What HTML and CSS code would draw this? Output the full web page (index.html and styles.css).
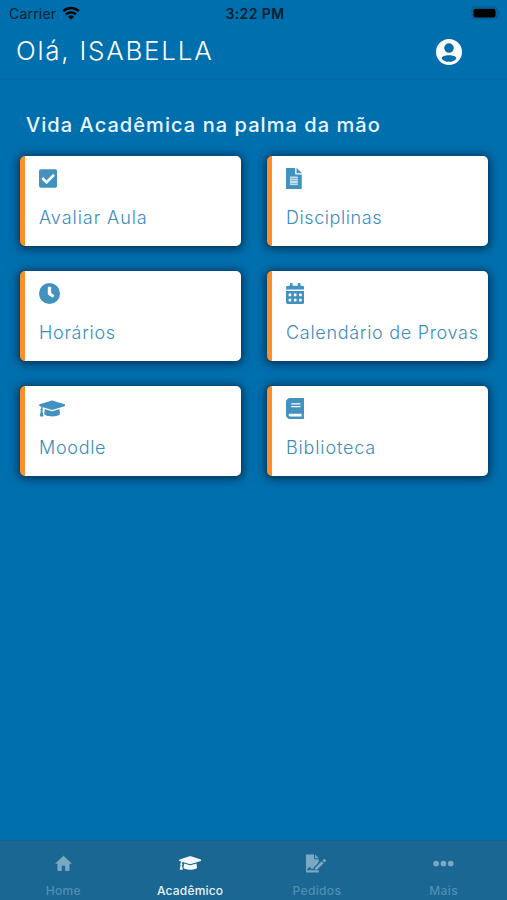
FILE: index.html
```html
<!DOCTYPE html>
<html lang="pt-BR">
<head>
    <meta charset="UTF-8">
    <meta name="viewport" content="width=device-width, initial-scale=1.0">
    <title>Acadêmico</title>
    <link rel="stylesheet" href="styles.css">
</head>
<body>
    <div class="app">
        <div class="status-bar">
            <div class="carrier">
                <span>Carrier</span>
                <svg class="wifi" viewBox="0 0 18 14">
                    <path d="M1.2 5.2a11.2 11.2 0 0 1 15.6 0" fill="none" stroke="currentColor" stroke-width="2.5"/>
                    <path d="M4 8.4a7.1 7.1 0 0 1 10 0" fill="none" stroke="currentColor" stroke-width="2.4"/>
                    <path d="M9 13.6l-2.9-2.9a4.1 4.1 0 0 1 5.8 0z" fill="currentColor"/>
                </svg>
            </div>
            <span class="time">3:22 PM</span>
            <svg class="battery" viewBox="0 0 30 14">
                <rect x="1" y="1" width="25" height="12" rx="3.5" fill="none" stroke="#07578a" stroke-width="1.2"/>
                <rect x="2.5" y="2.8" width="22" height="8.6" rx="2" fill="#000"/>
                <path d="M27.5 5.2c1.6.7 1.6 2.9 0 3.6z" fill="#07578a"/>
            </svg>
        </div>

        <header class="header">
            <h1>Olá, ISABELLA</h1>
            <svg class="profile" viewBox="0 0 24 24" fill="currentColor">
                <path fill-rule="evenodd" d="M12 0a12 12 0 1 0 0 24a12 12 0 0 0 0-24zM12 4a4.4 4.4 0 1 1 0 8.8a4.4 4.4 0 0 1 0-8.8zM12 15c3.6 0 6.8 1.1 6.8 2.9C17.5 20 15 21.1 12 21.1S6.500 20 5.200 17.900C5.200 16.100 8.400 15 12 15z"/>
            </svg>
        </header>

        <main class="content">
            <h2>Vida Acadêmica na palma da mão</h2>
            <div class="cards">
                <a class="card">
                    <svg class="icon" viewBox="0 0 448 512"><path d="M400 480H48c-26.510 0-48-21.490-48-48V80c0-26.510 21.490-48 48-48h352c26.510 0 48 21.490 48 48v352c0 26.510-21.490 48-48 48zm-204.686-98.059l184-184c6.248-6.248 6.248-16.379 0-22.627l-22.627-22.627c-6.248-6.248-16.379-6.249-22.628 0L184 302.745l-70.059-70.059c-6.248-6.248-16.379-6.248-22.628 0l-22.627 22.627c-6.248 6.248-6.248 16.379 0 22.627l104 104c6.249 6.250 16.379 6.250 22.628.001z"/></svg>
                    <span class="label avaliar">Avaliar Aula</span>
                </a>
                <a class="card">
                    <svg class="icon" viewBox="0 0 384 512"><path d="M0 0h224v136c0 13.200 10.800 24 24 24h136v352H0zM256 0h6l122 122v6H256z"/><path class="cut" d="M96 208h192v208H96z"/><path d="M112 244h160v14H112zM112 305h160v14H112zM112 366h160v14H112z"/></svg>
                    <span class="label disciplinas">Disciplinas</span>
                </a>
                <a class="card">
                    <svg class="icon" viewBox="0 0 512 512"><path d="M256 0a256 256 0 1 0 0 512a256 256 0 0 0 0-512zm57 350l-88-64c-6-5-10-12-10-20V116c0-13 11-24 24-24h34c13 0 24 11 24 24v126l66 48c11 8 13 23 5 34l-21 21c-8 11-23 13-34 5z"/></svg>
                    <span class="label horarios">Horários</span>
                </a>
                <a class="card">
                    <svg class="icon" viewBox="0 0 448 512"><path d="M0 464c0 26.500 21.500 48 48 48h352c26.500 0 48-21.500 48-48V192H0v272zm320-196c0-6.600 5.400-12 12-12h40c6.600 0 12 5.400 12 12v40c0 6.600-5.400 12-12 12h-40c-6.600 0-12-5.400-12-12v-40zm0 128c0-6.600 5.400-12 12-12h40c6.600 0 12 5.400 12 12v40c0 6.600-5.400 12-12 12h-40c-6.600 0-12-5.400-12-12v-40zM192 268c0-6.600 5.400-12 12-12h40c6.600 0 12 5.400 12 12v40c0 6.600-5.400 12-12 12h-40c-6.600 0-12-5.400-12-12v-40zm0 128c0-6.600 5.400-12 12-12h40c6.600 0 12 5.400 12 12v40c0 6.600-5.400 12-12 12h-40c-6.600 0-12-5.400-12-12v-40zM64 268c0-6.600 5.400-12 12-12h40c6.600 0 12 5.400 12 12v40c0 6.600-5.400 12-12 12H76c-6.600 0-12-5.400-12-12v-40zm0 128c0-6.600 5.400-12 12-12h40c6.600 0 12 5.400 12 12v40c0 6.600-5.400 12-12 12H76c-6.600 0-12-5.400-12-12v-40zM400 64h-48V16c0-8.800-7.200-16-16-16h-32c-8.800 0-16 7.200-16 16v48H160V16c0-8.800-7.200-16-16-16h-32c-8.800 0-16 7.200-16 16v48H48C21.500 64 0 85.500 0 112v48h448v-48c0-26.500-21.500-48-48-48z"/></svg>
                    <span class="label calendario">Calendário de Provas</span>
                </a>
                <a class="card">
                    <svg class="icon" viewBox="0 0 640 512"><use href="#cap"/></svg>
                    <span class="label moodle">Moodle</span>
                </a>
                <a class="card">
                    <svg class="icon" viewBox="0 0 448 512"><path d="M448 360V24c0-13.300-10.700-24-24-24H96C43 0 0 43 0 96v320c0 53 43 96 96 96h328c13.300 0 24-10.700 24-24v-16c0-7.500-3.500-14.300-8.900-18.700-4.200-15.400-4.200-59.300 0-74.700 5.400-4.300 8.900-11.100 8.900-18.600zM128 134c0-3.300 2.700-6 6-6h212c3.300 0 6 2.700 6 6v20c0 3.300-2.700 6-6 6H134c-3.300 0-6-2.700-6-6v-20zm0 64c0-3.300 2.700-6 6-6h212c3.300 0 6 2.700 6 6v20c0 3.300-2.700 6-6 6H134c-3.300 0-6-2.700-6-6v-20zm253.400 250H96c-17.700 0-32-14.300-32-32 0-17.600 14.400-32 32-32h285.400c-1.900 17.100-1.900 46.900 0 64z"/></svg>
                    <span class="label biblioteca">Biblioteca</span>
                </a>
            </div>
        </main>

        <nav class="tabs">
            <a class="tab">
                <svg class="tab-icon" viewBox="0 0 20 20"><path d="M10 2.200L18.300 10H16v7.500h-4V12H8v5.500H4V10H1.700z" stroke="currentColor" stroke-width=".6" stroke-linejoin="round"/></svg>
                <span>Home</span>
            </a>
            <a class="tab active">
                <svg class="tab-icon" viewBox="0 0 640 512"><path id="cap" d="M622.340 153.200L343.400 67.500c-15.200-4.670-31.600-4.670-46.790 0L17.660 153.200c-23.540 7.230-23.540 38.360 0 45.590l48.630 14.940c-10.670 13.190-17.230 29.280-17.880 46.900C38.780 266.150 32 276.110 32 288c0 10.780 5.680 19.850 13.860 25.650L20.330 428.530C18.110 438.520 25.710 448 35.940 448h56.110c10.240 0 17.840-9.480 15.620-19.470L82.140 313.650C90.320 307.850 96 298.780 96 288c0-11.570-6.470-21.250-15.660-26.870.76-15.020 8.440-28.300 20.690-36.720L296.600 284.500c9.060 2.780 26.440 6.250 46.790 0l278.950-85.700c23.550-7.240 23.550-38.360 0-45.600zM352.790 315.090c-28.530 8.760-52.840 3.920-65.590 0l-145.020-44.550L128 384c0 35.350 85.960 64 192 64s192-28.650 192-64l-14.180-113.470-145.030 44.560z"/></svg>
                <span>Acadêmico</span>
            </a>
            <a class="tab">
                <svg class="tab-icon pedidos" viewBox="0 0 22 20">
                    <path d="M0 .5h8.500v5h5v3.200L8.200 14v2.200H4.700l-1-2-1.900 2H1v.8h12.500V19.500H0zM9.500.5l4 4h-4zM9.500 14.600l7-7 2.100 2.100-7 7H9.500zM17.300 6.800L18.600 5.500q.7-.7 1.400 0l.7.700q.7.700 0 1.400l-1.300 1.300z"/>
                    <path d="M1.800 16l2-2.400 1.300 2.400h4.400" fill="none" stroke="#1b6793" stroke-width="1"/>
                </svg>
                <span>Pedidos</span>
            </a>
            <a class="tab">
                <svg class="tab-icon" viewBox="0 0 22 20"><circle cx="3.300" cy="10" r="3"/><circle cx="11" cy="10" r="3"/><circle cx="18.700" cy="10" r="3"/></svg>
                <span>Mais</span>
            </a>
        </nav>
    </div>
</body>
</html>
```
FILE: styles.css
```css
*{
    margin: 0;
    padding: 0;
    box-sizing: border-box;
}

body{
    background-color: #006fae;
    font-family: Inter, sans-serif;
}

.app{
    height: 100vh;
    display: flex;
    flex-direction: column;
}

.status-bar{
    height: 27px;
    padding: 0 6px 0 9px;
    display: grid;
    grid-template-columns: 1fr auto 1fr;
    align-items: center;
    font-size: 14px;
    color: #08202f;
}

.carrier{
    display: flex;
    align-items: center;
    gap: 6px;
    letter-spacing: 0.2px;
}

.wifi{
    width: 18px;
    height: 14px;
    margin-top: -2px;
    color: #000;
}

.time{
    font-weight: 600;
    letter-spacing: 0.4px;
}

.battery{
    width: 30px;
    height: 14px;
    margin-top: -1px;
    justify-self: end;
}

.header{
    height: 53px;
    padding: 0 45px 3px 16px;
    display: flex;
    align-items: center;
    justify-content: space-between;
    border-bottom: 1px solid #0668a2;
    color: #fff;
}

.header h1{
    margin-top: -2px;
    font-size: 26px;
    font-weight: 300;
    letter-spacing: 1.75px;
}

.profile{
    width: 26px;
    height: 26px;
}

.content{
    flex: 1;
    padding: 33px 19px 0 20px;
}

.content h2{
    padding-left: 6px;
    font-size: 20px;
    line-height: 24px;
    font-weight: 500;
    letter-spacing: 1.06px;
    color: #e9f6ff;
}

.cards{
    margin-top: 19px;
    display: grid;
    grid-template-columns: 221px 221px;
    justify-content: space-between;
    gap: 25px;
}

.card{
    height: 90px;
    padding: 12px 0 0 14px;
    display: flex;
    flex-direction: column;
    align-items: flex-start;
    border-left: 5px solid #fd8e28;
    border-radius: 5px;
    background-color: #fff;
    box-shadow: 0 1px 8px 2px rgba(0, 20, 40, 0.65);
}

.icon{
    height: 21px;
    fill: #4292c0;
}

.cut{
    fill: #c4deec;
}

.label{
    margin-top: 17px;
    font-size: 18px;
    line-height: 24px;
    font-weight: 300;
    white-space: nowrap;
    letter-spacing: 0.7px;
    color: #3a8dbd;
}

.avaliar{
    letter-spacing: 0.95px;
}

.disciplinas{
    letter-spacing: 0.58px;
}

.biblioteca{
    letter-spacing: 0.85px;
}

.tabs{
    height: 60px;
    padding-top: 13px;
    display: grid;
    grid-template-columns: repeat(4, 1fr);
    border-top: 1px solid #17608c;
    background-color: #1b6793;
}

.tab{
    display: flex;
    flex-direction: column;
    align-items: center;
    gap: 10px;
    font-size: 12px;
    line-height: 15px;
    font-weight: 500;
    letter-spacing: 0.35px;
    color: #4e8fb2;
}

.tab-icon{
    height: 19px;
    fill: #79a9c3;
    color: #79a9c3;
}

.active{
    letter-spacing: 0.2px;
    color: #e6f3fa;
}

.active .tab-icon{
    height: 18px;
    margin-bottom: 1px;
    fill: #f2f8fb;
}
```
